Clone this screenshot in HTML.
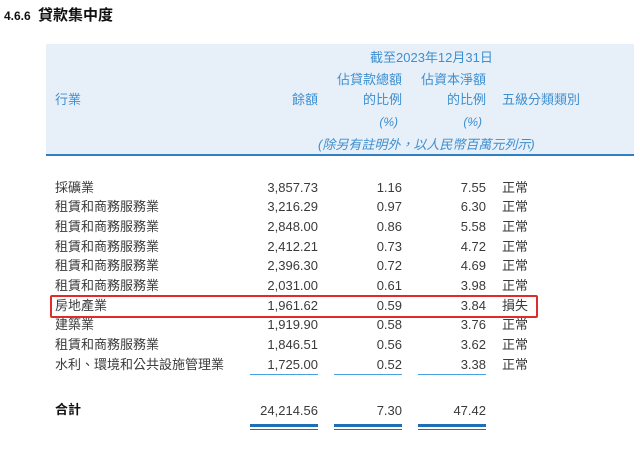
<!DOCTYPE html><html><head><meta charset="utf-8"><style>
body{margin:0;width:640px;height:450px;background:#fff;position:relative;font-family:"Liberation Sans","Noto Sans CJK TC",sans-serif;overflow:hidden}
.a{position:absolute;white-space:nowrap;line-height:1}
.h{color:#3d8fd0;font-size:13px}
.r{font-size:13px;color:#3a3a3a}
.rt{text-align:right}
</style></head><body>
<div class="a" style="left:4px;top:10px;font-size:12px;font-weight:bold;color:#111">4.6.6</div>
<div class="a" style="left:38px;top:8px;font-size:15px;font-weight:bold;color:#111">貸款集中度</div>
<div class="a" style="left:46px;top:44px;width:588px;height:110px;background:#e7eff9;border-bottom:2px solid #2e7fc4"></div>
<div class="a h" style="left:370px;top:51px">截至2023年12月31日</div>
<div class="a h rt" style="right:238px;top:73px">佔貸款總額</div>
<div class="a h rt" style="right:154px;top:73px">佔資本淨額</div>
<div class="a h" style="left:55px;top:93px">行業</div>
<div class="a h rt" style="right:322px;top:93px">餘額</div>
<div class="a h rt" style="right:238px;top:93px">的比例</div>
<div class="a h rt" style="right:154px;top:93px">的比例</div>
<div class="a h" style="left:502px;top:93px">五級分類類別</div>
<div class="a h rt" style="right:242px;top:116px;font-style:italic;font-size:12px">(%)</div>
<div class="a h rt" style="right:158px;top:116px;font-style:italic;font-size:12px">(%)</div>
<div class="a h" style="left:318px;top:138px;font-style:italic">(除另有註明外，以人民幣百萬元列示)</div>
<div class="a" style="left:50px;top:295px;width:484px;height:19px;border:2px solid #e02b2b;border-radius:2px"></div>
<div id="rows"></div>
<script>
var d=[["採礦業","3,857.73","1.16","7.55","正常"],["租賃和商務服務業","3,216.29","0.97","6.30","正常"],["租賃和商務服務業","2,848.00","0.86","5.58","正常"],["租賃和商務服務業","2,412.21","0.73","4.72","正常"],["租賃和商務服務業","2,396.30","0.72","4.69","正常"],["租賃和商務服務業","2,031.00","0.61","3.98","正常"],["房地產業","1,961.62","0.59","3.84","損失"],["建築業","1,919.90","0.58","3.76","正常"],["租賃和商務服務業","1,846.51","0.56","3.62","正常"],["水利、環境和公共設施管理業","1,725.00","0.52","3.38","正常"]];
var h="";d.forEach(function(r,i){var t=180.5+i*19.7;
h+='<div class="a r" style="left:55px;top:'+t+'px">'+r[0]+'</div><div class="a r rt" style="right:322px;top:'+t+'px">'+r[1]+'</div><div class="a r rt" style="right:238px;top:'+t+'px">'+r[2]+'</div><div class="a r rt" style="right:154px;top:'+t+'px">'+r[3]+'</div><div class="a r" style="left:502px;top:'+t+'px">'+r[4]+'</div>';});
[[250],[334],[418]].forEach(function(x){x=x[0];
h+='<div class="a" style="left:'+x+'px;top:374px;width:68px;height:1px;background:#4aa0e0"></div><div class="a" style="left:'+x+'px;top:424px;width:68px;height:3px;background:#1f6fb8"></div><div class="a" style="left:'+x+'px;top:429px;width:68px;height:1px;background:#1f6fb8"></div>';});
document.getElementById("rows").innerHTML=h;
</script>
<div class="a" style="left:55px;top:403px;font-size:13px;font-weight:bold;color:#111">合計</div>
<div class="a r rt" style="right:322px;top:404px">24,214.56</div>
<div class="a r rt" style="right:238px;top:404px">7.30</div>
<div class="a r rt" style="right:154px;top:404px">47.42</div>
</body></html>
